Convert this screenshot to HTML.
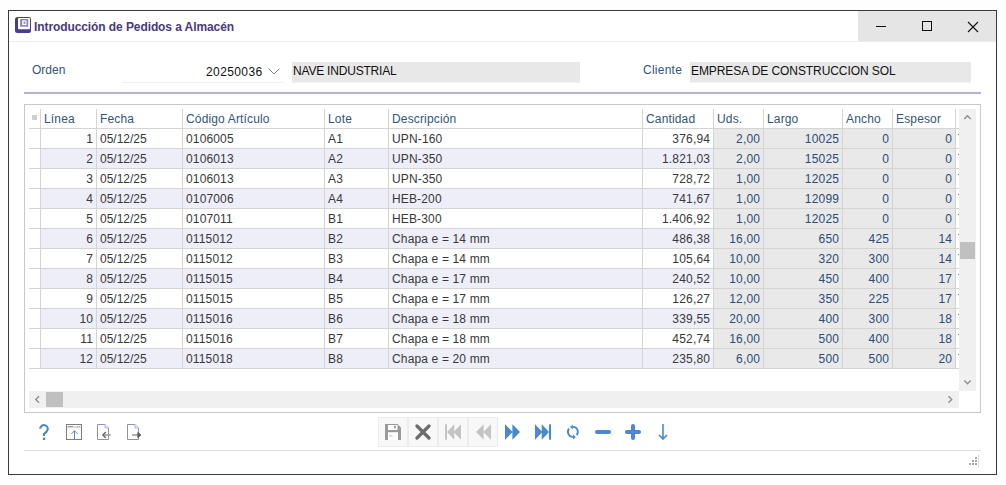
<!DOCTYPE html>
<html><head><meta charset="utf-8"><style>
*{margin:0;padding:0;box-sizing:border-box}
html,body{width:1006px;height:485px;overflow:hidden;background:#fefefe;font-family:"Liberation Sans",sans-serif;font-size:12px}
.a{position:absolute}
.win{left:8px;top:10px;width:989px;height:465px;border:1px solid #3d3548;background:#fff}
.t{position:absolute;white-space:nowrap;line-height:14px}
.hl{position:absolute;height:1px;background:#d4d4d4}
.vl{position:absolute;width:1px;background:#d4d4d4}
</style></head><body>

<div class="a win"></div>
<div class="a" style="left:9px;top:41px;width:987px;height:1px;background:#ececec"></div>
<div class="a" style="left:858px;top:11px;width:138px;height:30px;background:#e5e5e5"></div>
<div class="a" style="left:876px;top:26px;width:10px;height:1px;background:#111"></div>
<div class="a" style="left:922px;top:21px;width:10px;height:10px;border:1px solid #111"></div>
<svg class="a" style="left:967px;top:21px" width="12" height="12" viewBox="0 0 12 12"><path d="M1 1L11 11M11 1L1 11" stroke="#111" stroke-width="1.1" fill="none"/></svg>
<svg class="a" style="left:15px;top:17px" width="16" height="16" viewBox="0 0 16 16">
<rect x="0" y="0" width="16" height="16" rx="2.5" fill="#4a3d8c"/>
<rect x="3" y="1" width="12" height="11.3" rx="1" fill="#fff"/>
<rect x="5.2" y="2" width="8" height="7.7" fill="#8a82ba"/>
<rect x="7.2" y="3.3" width="4.3" height="4.8" fill="#fff"/>
<rect x="8.6" y="4.3" width="1.8" height="2.7" fill="#9a93c4"/>
</svg>
<div class="t" style="left:34px;top:19.5px;font-weight:bold;color:#4a3a7a;font-size:12px;letter-spacing:-0.09px">Introducción de Pedidos a Almacén</div>
<div class="t" style="left:32px;top:63px;color:#34557a">Orden</div>
<div class="a" style="left:122px;top:82px;width:161px;height:1px;background:#f0f0f0"></div>
<div class="t" style="left:206px;top:65px;color:#111;letter-spacing:0.4px">20250036</div>
<svg class="a" style="left:268px;top:68px" width="13" height="8" viewBox="0 0 13 8"><path d="M0.6 0.6L6 6L11.4 0.6" stroke="#808080" stroke-width="1" fill="none"/></svg>
<div class="a" style="left:292px;top:62px;width:288px;height:20px;background:#e8e8e8"></div>
<div class="t" style="left:293px;top:64px;color:#111;letter-spacing:-0.2px">NAVE INDUSTRIAL</div>
<div class="t" style="left:643px;top:63px;color:#34557a;letter-spacing:0.25px">Cliente</div>
<div class="a" style="left:690px;top:62px;width:281px;height:20px;background:#e8e8e8"></div>
<div class="t" style="left:691px;top:64px;color:#111;letter-spacing:-0.08px">EMPRESA DE CONSTRUCCION SOL</div>
<div class="a" style="left:292px;top:82px;width:288px;height:1px;background:#f3f3f3"></div>
<div class="a" style="left:690px;top:82px;width:281px;height:1px;background:#f3f3f3"></div>
<div class="a" style="left:24px;top:92px;width:957px;height:2px;background:#bab2d6"></div>
<div class="a" style="left:24px;top:104px;width:957px;height:309px;border:1px solid #c8c8c8;background:#fff"></div>
<div class="a" style="left:714px;top:129px;width:241px;height:19px;background:#e9e9e9"></div>
<div class="a" style="left:41px;top:149px;width:914px;height:19px;background:#eeeef8"></div>
<div class="a" style="left:714px;top:149px;width:241px;height:19px;background:#e9e9e9"></div>
<div class="a" style="left:714px;top:169px;width:241px;height:19px;background:#e9e9e9"></div>
<div class="a" style="left:41px;top:189px;width:914px;height:19px;background:#eeeef8"></div>
<div class="a" style="left:714px;top:189px;width:241px;height:19px;background:#e9e9e9"></div>
<div class="a" style="left:714px;top:209px;width:241px;height:19px;background:#e9e9e9"></div>
<div class="a" style="left:41px;top:229px;width:914px;height:19px;background:#eeeef8"></div>
<div class="a" style="left:714px;top:229px;width:241px;height:19px;background:#e9e9e9"></div>
<div class="a" style="left:714px;top:249px;width:241px;height:19px;background:#e9e9e9"></div>
<div class="a" style="left:41px;top:269px;width:914px;height:19px;background:#eeeef8"></div>
<div class="a" style="left:714px;top:269px;width:241px;height:19px;background:#e9e9e9"></div>
<div class="a" style="left:714px;top:289px;width:241px;height:19px;background:#e9e9e9"></div>
<div class="a" style="left:41px;top:309px;width:914px;height:19px;background:#eeeef8"></div>
<div class="a" style="left:714px;top:309px;width:241px;height:19px;background:#e9e9e9"></div>
<div class="a" style="left:714px;top:329px;width:241px;height:19px;background:#e9e9e9"></div>
<div class="a" style="left:41px;top:349px;width:914px;height:19px;background:#eeeef8"></div>
<div class="a" style="left:714px;top:349px;width:241px;height:19px;background:#e9e9e9"></div>
<div class="a" style="left:32px;top:115px;width:5px;height:5px;background:#cfcfcf"></div>
<div class="hl" style="left:29px;top:128px;width:930px"></div>
<div class="hl" style="left:29px;top:148px;width:930px"></div>
<div class="hl" style="left:29px;top:168px;width:930px"></div>
<div class="hl" style="left:29px;top:188px;width:930px"></div>
<div class="hl" style="left:29px;top:208px;width:930px"></div>
<div class="hl" style="left:29px;top:228px;width:930px"></div>
<div class="hl" style="left:29px;top:248px;width:930px"></div>
<div class="hl" style="left:29px;top:268px;width:930px"></div>
<div class="hl" style="left:29px;top:288px;width:930px"></div>
<div class="hl" style="left:29px;top:308px;width:930px"></div>
<div class="hl" style="left:29px;top:328px;width:930px"></div>
<div class="hl" style="left:29px;top:348px;width:930px"></div>
<div class="hl" style="left:29px;top:368px;width:930px"></div>
<div class="vl" style="left:40px;top:109px;height:259px"></div>
<div class="vl" style="left:96px;top:109px;height:259px"></div>
<div class="vl" style="left:182px;top:109px;height:259px"></div>
<div class="vl" style="left:324px;top:109px;height:259px"></div>
<div class="vl" style="left:388px;top:109px;height:259px"></div>
<div class="vl" style="left:642px;top:109px;height:259px"></div>
<div class="vl" style="left:713px;top:109px;height:259px"></div>
<div class="vl" style="left:763px;top:109px;height:259px"></div>
<div class="vl" style="left:842px;top:109px;height:259px"></div>
<div class="vl" style="left:892px;top:109px;height:259px"></div>
<div class="vl" style="left:955px;top:109px;height:259px"></div>
<div class="t" style="left:44px;top:112px;color:#34557a;letter-spacing:0.15px">Línea</div>
<div class="t" style="left:100px;top:112px;color:#34557a;letter-spacing:0.15px">Fecha</div>
<div class="t" style="left:186px;top:112px;color:#34557a;letter-spacing:0.15px">Código Artículo</div>
<div class="t" style="left:328px;top:112px;color:#34557a;letter-spacing:0.15px">Lote</div>
<div class="t" style="left:392px;top:112px;color:#34557a;letter-spacing:0.15px">Descripción</div>
<div class="t" style="left:646px;top:112px;color:#34557a;letter-spacing:0.15px">Cantidad</div>
<div class="t" style="left:717px;top:112px;color:#34557a;letter-spacing:0.15px">Uds.</div>
<div class="t" style="left:767px;top:112px;color:#34557a;letter-spacing:0.15px">Largo</div>
<div class="t" style="left:846px;top:112px;color:#34557a;letter-spacing:0.15px">Ancho</div>
<div class="t" style="left:896px;top:112px;color:#34557a;letter-spacing:0.15px">Espesor</div>
<div class="t" style="right:912.8px;top:132px;color:#383838;letter-spacing:0.2px">1</div>
<div class="t" style="left:100px;top:132px;color:#383838;letter-spacing:0">05/12/25</div>
<div class="t" style="left:186px;top:132px;color:#383838;letter-spacing:0.15px">0106005</div>
<div class="t" style="left:328px;top:132px;color:#383838;letter-spacing:0.15px">A1</div>
<div class="t" style="left:392px;top:132px;color:#383838;letter-spacing:0.15px">UPN-160</div>
<div class="t" style="right:295.8px;top:132px;color:#383838;letter-spacing:0.2px">376,94</div>
<div class="t" style="right:245.8px;top:132px;color:#2c4b78;letter-spacing:0.2px">2,00</div>
<div class="t" style="right:166.8px;top:132px;color:#2c4b78;letter-spacing:0.2px">10025</div>
<div class="t" style="right:116.8px;top:132px;color:#2c4b78;letter-spacing:0.2px">0</div>
<div class="t" style="right:53.8px;top:132px;color:#2c4b78;letter-spacing:0.2px">0</div>
<div class="a" style="left:958px;top:134px;width:1px;height:1px;background:#888"></div>
<div class="t" style="right:912.8px;top:152px;color:#383838;letter-spacing:0.2px">2</div>
<div class="t" style="left:100px;top:152px;color:#383838;letter-spacing:0">05/12/25</div>
<div class="t" style="left:186px;top:152px;color:#383838;letter-spacing:0.15px">0106013</div>
<div class="t" style="left:328px;top:152px;color:#383838;letter-spacing:0.15px">A2</div>
<div class="t" style="left:392px;top:152px;color:#383838;letter-spacing:0.15px">UPN-350</div>
<div class="t" style="right:295.8px;top:152px;color:#383838;letter-spacing:0.2px">1.821,03</div>
<div class="t" style="right:245.8px;top:152px;color:#2c4b78;letter-spacing:0.2px">2,00</div>
<div class="t" style="right:166.8px;top:152px;color:#2c4b78;letter-spacing:0.2px">15025</div>
<div class="t" style="right:116.8px;top:152px;color:#2c4b78;letter-spacing:0.2px">0</div>
<div class="t" style="right:53.8px;top:152px;color:#2c4b78;letter-spacing:0.2px">0</div>
<div class="a" style="left:958px;top:154px;width:1px;height:1px;background:#888"></div>
<div class="t" style="right:912.8px;top:172px;color:#383838;letter-spacing:0.2px">3</div>
<div class="t" style="left:100px;top:172px;color:#383838;letter-spacing:0">05/12/25</div>
<div class="t" style="left:186px;top:172px;color:#383838;letter-spacing:0.15px">0106013</div>
<div class="t" style="left:328px;top:172px;color:#383838;letter-spacing:0.15px">A3</div>
<div class="t" style="left:392px;top:172px;color:#383838;letter-spacing:0.15px">UPN-350</div>
<div class="t" style="right:295.8px;top:172px;color:#383838;letter-spacing:0.2px">728,72</div>
<div class="t" style="right:245.8px;top:172px;color:#2c4b78;letter-spacing:0.2px">1,00</div>
<div class="t" style="right:166.8px;top:172px;color:#2c4b78;letter-spacing:0.2px">12025</div>
<div class="t" style="right:116.8px;top:172px;color:#2c4b78;letter-spacing:0.2px">0</div>
<div class="t" style="right:53.8px;top:172px;color:#2c4b78;letter-spacing:0.2px">0</div>
<div class="a" style="left:958px;top:174px;width:1px;height:1px;background:#888"></div>
<div class="t" style="right:912.8px;top:192px;color:#383838;letter-spacing:0.2px">4</div>
<div class="t" style="left:100px;top:192px;color:#383838;letter-spacing:0">05/12/25</div>
<div class="t" style="left:186px;top:192px;color:#383838;letter-spacing:0.15px">0107006</div>
<div class="t" style="left:328px;top:192px;color:#383838;letter-spacing:0.15px">A4</div>
<div class="t" style="left:392px;top:192px;color:#383838;letter-spacing:0.15px">HEB-200</div>
<div class="t" style="right:295.8px;top:192px;color:#383838;letter-spacing:0.2px">741,67</div>
<div class="t" style="right:245.8px;top:192px;color:#2c4b78;letter-spacing:0.2px">1,00</div>
<div class="t" style="right:166.8px;top:192px;color:#2c4b78;letter-spacing:0.2px">12099</div>
<div class="t" style="right:116.8px;top:192px;color:#2c4b78;letter-spacing:0.2px">0</div>
<div class="t" style="right:53.8px;top:192px;color:#2c4b78;letter-spacing:0.2px">0</div>
<div class="a" style="left:958px;top:194px;width:1px;height:1px;background:#888"></div>
<div class="t" style="right:912.8px;top:212px;color:#383838;letter-spacing:0.2px">5</div>
<div class="t" style="left:100px;top:212px;color:#383838;letter-spacing:0">05/12/25</div>
<div class="t" style="left:186px;top:212px;color:#383838;letter-spacing:0.15px">0107011</div>
<div class="t" style="left:328px;top:212px;color:#383838;letter-spacing:0.15px">B1</div>
<div class="t" style="left:392px;top:212px;color:#383838;letter-spacing:0.15px">HEB-300</div>
<div class="t" style="right:295.8px;top:212px;color:#383838;letter-spacing:0.2px">1.406,92</div>
<div class="t" style="right:245.8px;top:212px;color:#2c4b78;letter-spacing:0.2px">1,00</div>
<div class="t" style="right:166.8px;top:212px;color:#2c4b78;letter-spacing:0.2px">12025</div>
<div class="t" style="right:116.8px;top:212px;color:#2c4b78;letter-spacing:0.2px">0</div>
<div class="t" style="right:53.8px;top:212px;color:#2c4b78;letter-spacing:0.2px">0</div>
<div class="a" style="left:958px;top:214px;width:1px;height:1px;background:#888"></div>
<div class="t" style="right:912.8px;top:232px;color:#383838;letter-spacing:0.2px">6</div>
<div class="t" style="left:100px;top:232px;color:#383838;letter-spacing:0">05/12/25</div>
<div class="t" style="left:186px;top:232px;color:#383838;letter-spacing:0.15px">0115012</div>
<div class="t" style="left:328px;top:232px;color:#383838;letter-spacing:0.15px">B2</div>
<div class="t" style="left:392px;top:232px;color:#383838;letter-spacing:0.15px">Chapa e = 14 mm</div>
<div class="t" style="right:295.8px;top:232px;color:#383838;letter-spacing:0.2px">486,38</div>
<div class="t" style="right:245.8px;top:232px;color:#2c4b78;letter-spacing:0.2px">16,00</div>
<div class="t" style="right:166.8px;top:232px;color:#2c4b78;letter-spacing:0.2px">650</div>
<div class="t" style="right:116.8px;top:232px;color:#2c4b78;letter-spacing:0.2px">425</div>
<div class="t" style="right:53.8px;top:232px;color:#2c4b78;letter-spacing:0.2px">14</div>
<div class="a" style="left:958px;top:234px;width:1px;height:1px;background:#888"></div>
<div class="t" style="right:912.8px;top:252px;color:#383838;letter-spacing:0.2px">7</div>
<div class="t" style="left:100px;top:252px;color:#383838;letter-spacing:0">05/12/25</div>
<div class="t" style="left:186px;top:252px;color:#383838;letter-spacing:0.15px">0115012</div>
<div class="t" style="left:328px;top:252px;color:#383838;letter-spacing:0.15px">B3</div>
<div class="t" style="left:392px;top:252px;color:#383838;letter-spacing:0.15px">Chapa e = 14 mm</div>
<div class="t" style="right:295.8px;top:252px;color:#383838;letter-spacing:0.2px">105,64</div>
<div class="t" style="right:245.8px;top:252px;color:#2c4b78;letter-spacing:0.2px">10,00</div>
<div class="t" style="right:166.8px;top:252px;color:#2c4b78;letter-spacing:0.2px">320</div>
<div class="t" style="right:116.8px;top:252px;color:#2c4b78;letter-spacing:0.2px">300</div>
<div class="t" style="right:53.8px;top:252px;color:#2c4b78;letter-spacing:0.2px">14</div>
<div class="a" style="left:958px;top:254px;width:1px;height:1px;background:#888"></div>
<div class="t" style="right:912.8px;top:272px;color:#383838;letter-spacing:0.2px">8</div>
<div class="t" style="left:100px;top:272px;color:#383838;letter-spacing:0">05/12/25</div>
<div class="t" style="left:186px;top:272px;color:#383838;letter-spacing:0.15px">0115015</div>
<div class="t" style="left:328px;top:272px;color:#383838;letter-spacing:0.15px">B4</div>
<div class="t" style="left:392px;top:272px;color:#383838;letter-spacing:0.15px">Chapa e = 17 mm</div>
<div class="t" style="right:295.8px;top:272px;color:#383838;letter-spacing:0.2px">240,52</div>
<div class="t" style="right:245.8px;top:272px;color:#2c4b78;letter-spacing:0.2px">10,00</div>
<div class="t" style="right:166.8px;top:272px;color:#2c4b78;letter-spacing:0.2px">450</div>
<div class="t" style="right:116.8px;top:272px;color:#2c4b78;letter-spacing:0.2px">400</div>
<div class="t" style="right:53.8px;top:272px;color:#2c4b78;letter-spacing:0.2px">17</div>
<div class="a" style="left:958px;top:274px;width:1px;height:1px;background:#888"></div>
<div class="t" style="right:912.8px;top:292px;color:#383838;letter-spacing:0.2px">9</div>
<div class="t" style="left:100px;top:292px;color:#383838;letter-spacing:0">05/12/25</div>
<div class="t" style="left:186px;top:292px;color:#383838;letter-spacing:0.15px">0115015</div>
<div class="t" style="left:328px;top:292px;color:#383838;letter-spacing:0.15px">B5</div>
<div class="t" style="left:392px;top:292px;color:#383838;letter-spacing:0.15px">Chapa e = 17 mm</div>
<div class="t" style="right:295.8px;top:292px;color:#383838;letter-spacing:0.2px">126,27</div>
<div class="t" style="right:245.8px;top:292px;color:#2c4b78;letter-spacing:0.2px">12,00</div>
<div class="t" style="right:166.8px;top:292px;color:#2c4b78;letter-spacing:0.2px">350</div>
<div class="t" style="right:116.8px;top:292px;color:#2c4b78;letter-spacing:0.2px">225</div>
<div class="t" style="right:53.8px;top:292px;color:#2c4b78;letter-spacing:0.2px">17</div>
<div class="a" style="left:958px;top:294px;width:1px;height:1px;background:#888"></div>
<div class="t" style="right:912.8px;top:312px;color:#383838;letter-spacing:0.2px">10</div>
<div class="t" style="left:100px;top:312px;color:#383838;letter-spacing:0">05/12/25</div>
<div class="t" style="left:186px;top:312px;color:#383838;letter-spacing:0.15px">0115016</div>
<div class="t" style="left:328px;top:312px;color:#383838;letter-spacing:0.15px">B6</div>
<div class="t" style="left:392px;top:312px;color:#383838;letter-spacing:0.15px">Chapa e = 18 mm</div>
<div class="t" style="right:295.8px;top:312px;color:#383838;letter-spacing:0.2px">339,55</div>
<div class="t" style="right:245.8px;top:312px;color:#2c4b78;letter-spacing:0.2px">20,00</div>
<div class="t" style="right:166.8px;top:312px;color:#2c4b78;letter-spacing:0.2px">400</div>
<div class="t" style="right:116.8px;top:312px;color:#2c4b78;letter-spacing:0.2px">300</div>
<div class="t" style="right:53.8px;top:312px;color:#2c4b78;letter-spacing:0.2px">18</div>
<div class="a" style="left:958px;top:314px;width:1px;height:1px;background:#888"></div>
<div class="t" style="right:912.8px;top:332px;color:#383838;letter-spacing:0.2px">11</div>
<div class="t" style="left:100px;top:332px;color:#383838;letter-spacing:0">05/12/25</div>
<div class="t" style="left:186px;top:332px;color:#383838;letter-spacing:0.15px">0115016</div>
<div class="t" style="left:328px;top:332px;color:#383838;letter-spacing:0.15px">B7</div>
<div class="t" style="left:392px;top:332px;color:#383838;letter-spacing:0.15px">Chapa e = 18 mm</div>
<div class="t" style="right:295.8px;top:332px;color:#383838;letter-spacing:0.2px">452,74</div>
<div class="t" style="right:245.8px;top:332px;color:#2c4b78;letter-spacing:0.2px">16,00</div>
<div class="t" style="right:166.8px;top:332px;color:#2c4b78;letter-spacing:0.2px">500</div>
<div class="t" style="right:116.8px;top:332px;color:#2c4b78;letter-spacing:0.2px">400</div>
<div class="t" style="right:53.8px;top:332px;color:#2c4b78;letter-spacing:0.2px">18</div>
<div class="a" style="left:958px;top:334px;width:1px;height:1px;background:#888"></div>
<div class="t" style="right:912.8px;top:352px;color:#383838;letter-spacing:0.2px">12</div>
<div class="t" style="left:100px;top:352px;color:#383838;letter-spacing:0">05/12/25</div>
<div class="t" style="left:186px;top:352px;color:#383838;letter-spacing:0.15px">0115018</div>
<div class="t" style="left:328px;top:352px;color:#383838;letter-spacing:0.15px">B8</div>
<div class="t" style="left:392px;top:352px;color:#383838;letter-spacing:0.15px">Chapa e = 20 mm</div>
<div class="t" style="right:295.8px;top:352px;color:#383838;letter-spacing:0.2px">235,80</div>
<div class="t" style="right:245.8px;top:352px;color:#2c4b78;letter-spacing:0.2px">6,00</div>
<div class="t" style="right:166.8px;top:352px;color:#2c4b78;letter-spacing:0.2px">500</div>
<div class="t" style="right:116.8px;top:352px;color:#2c4b78;letter-spacing:0.2px">500</div>
<div class="t" style="right:53.8px;top:352px;color:#2c4b78;letter-spacing:0.2px">20</div>
<div class="a" style="left:958px;top:354px;width:1px;height:1px;background:#888"></div>
<div class="a" style="left:959px;top:109px;width:17px;height:282px;background:#f0f0f0"></div>
<svg class="a" style="left:963px;top:114px" width="9" height="7" viewBox="0 0 9 7"><path d="M1.3 5L4.5 1.8L7.7 5" stroke="#8f8f8f" stroke-width="1.4" fill="none"/></svg>
<svg class="a" style="left:963px;top:379px" width="9" height="7" viewBox="0 0 9 7"><path d="M1.3 1.5L4.5 4.7L7.7 1.5" stroke="#8f8f8f" stroke-width="1.4" fill="none"/></svg>
<div class="a" style="left:960px;top:242px;width:15px;height:17px;background:#c0c0c0"></div>
<div class="a" style="left:29px;top:391px;width:930px;height:17px;background:#f0f0f0"></div>
<svg class="a" style="left:34px;top:395px" width="7" height="9" viewBox="0 0 7 9"><path d="M5 1.3L1.8 4.5L5 7.7" stroke="#8f8f8f" stroke-width="1.4" fill="none"/></svg>
<svg class="a" style="left:947px;top:395px" width="7" height="9" viewBox="0 0 7 9"><path d="M1.5 1.3L4.7 4.5L1.5 7.7" stroke="#8f8f8f" stroke-width="1.4" fill="none"/></svg>
<div class="a" style="left:46px;top:392px;width:17px;height:15px;background:#c0c0c0"></div>
<div class="a" style="left:24px;top:450px;width:957px;height:1px;background:#dcdcdc"></div>
<svg class="a" style="left:38px;top:423px" width="12" height="18" viewBox="0 0 12 18">
<path d="M2.2 5.8A3.8 3.8 0 1 1 8.6 8.6L6 10.9V13" stroke="#4a86c8" stroke-width="2.1" fill="none"/>
<rect x="4.9" y="14.6" width="2.3" height="2.4" fill="#4a86c8"/>
</svg>
<svg class="a" style="left:66px;top:424px" width="16" height="16" viewBox="0 0 16 16">
<rect x="0.5" y="0.5" width="15" height="15" fill="none" stroke="#7e7e7e" stroke-width="1"/>
<rect x="1" y="2.2" width="14" height="2" fill="#dcdcdc"/>
<rect x="2" y="2" width="5" height="1" fill="#9a9a9a"/>
<rect x="11" y="2" width="1" height="1" fill="#aaa"/>
<rect x="13" y="2" width="1" height="1" fill="#aaa"/>
<path d="M8.5 15.5V6.8M5.5 9.8L8.5 6.8L11.5 9.8" stroke="#5b82bd" stroke-width="1" fill="none"/>
</svg>
<svg class="a" style="left:97px;top:424px" width="15" height="16" viewBox="0 0 15 16">
<path d="M0.5 0.5H8L11.5 4V15.5H0.5Z" fill="none" stroke="#8c92b8" stroke-width="1"/>
<path d="M8 0.5V4H11.5" fill="#eeeeff" stroke="#a0a6cc" stroke-width="0.8"/>
<path d="M6.5 11H13.8" stroke="#a8a8a8" stroke-width="1.8"/>
<path d="M8.8 8L5.8 11L8.8 14" stroke="#5e5e5e" stroke-width="1.2" fill="none"/>
</svg>
<svg class="a" style="left:127px;top:424px" width="15" height="16" viewBox="0 0 15 16">
<path d="M0.5 0.5H8L11.5 4V15.5H0.5Z" fill="none" stroke="#8a94a8" stroke-width="1"/>
<path d="M8 0.5V4H11.5" fill="#eeeeff" stroke="#a0a6cc" stroke-width="0.8"/>
<path d="M5 11H11" stroke="#a8a8a8" stroke-width="1.8"/>
<path d="M10.9 8.3L13.8 11L10.9 13.7Z" stroke="#606060" stroke-width="1" fill="#606060"/>
</svg>
<div class="a" style="left:378px;top:417px;width:30px;height:30px;background:#f8f8f8;border:1px solid #ececec"></div>
<div class="a" style="left:408px;top:417px;width:30px;height:30px;background:#f8f8f8;border:1px solid #ececec"></div>
<div class="a" style="left:438px;top:417px;width:30px;height:30px;background:#f8f8f8;border:1px solid #ececec"></div>
<div class="a" style="left:468px;top:417px;width:30px;height:30px;background:#f8f8f8;border:1px solid #ececec"></div>
<svg class="a" style="left:385px;top:424px" width="16" height="16" viewBox="0 0 16 16">
<path d="M0 0H12.5L16 3.5V16H0Z" fill="#9a9a9a"/>
<rect x="3" y="1" width="9.5" height="5" fill="#fdfdfd"/>
<rect x="9" y="1.8" width="1.8" height="2.6" fill="#9a9a9a"/>
<rect x="3" y="8.2" width="10" height="7.8" fill="#fdfdfd"/>
<rect x="4.2" y="11" width="2.5" height="0.8" fill="#c0c0c0"/>
<rect x="4.2" y="12.2" width="4" height="0.6" fill="#d0d0d0"/>
</svg>
<svg class="a" style="left:415px;top:424px" width="16" height="16" viewBox="0 0 16 16"><path d="M2 2L14 14M14 2L2 14" stroke="#6c6c6c" stroke-width="3.2" stroke-linecap="round" fill="none"/></svg>
<svg class="a" style="left:445px;top:424px" width="17" height="16" viewBox="0 0 17 16"><rect x="0" y="0.3" width="2" height="15.4" fill="#c4c4c4"/><path d="M2 8L9.3 0.3V15.7Z M8.7 8L16 0.3V15.7Z" fill="#c4c4c4"/></svg>
<svg class="a" style="left:476px;top:424px" width="16" height="16" viewBox="0 0 16 16"><path d="M0 8L7.6 0.3V15.7Z M7.4 8L15 0.3V15.7Z" fill="#c4c4c4"/></svg>
<svg class="a" style="left:505px;top:424px" width="16" height="16" viewBox="0 0 16 16"><path d="M0 0.3L7.6 8L0 15.7Z M7.4 0.3L15 8L7.4 15.7Z" fill="#4a87d0"/></svg>
<svg class="a" style="left:535px;top:424px" width="17" height="16" viewBox="0 0 17 16"><rect x="14" y="0.3" width="2" height="15.4" fill="#4a87d0"/><path d="M0 0.3L7.3 8L0 15.7Z M6.7 0.3L14 8L6.7 15.7Z" fill="#4a87d0"/></svg>
<svg class="a" style="left:563px;top:422px" width="20" height="20" viewBox="0 0 20 20">
<path d="M9.6 4.9A5 5 0 0 1 13.7 13.1" stroke="#4a87d0" stroke-width="1.8" fill="none"/>
<path d="M6.1 6.7A5 5 0 0 0 10.2 14.9" stroke="#4a87d0" stroke-width="1.8" fill="none"/>
<path d="M9.8 2.4V7.4L7 4.9Z" fill="#4a87d0"/>
<path d="M10 12.4V17.4L12.8 14.9Z" fill="#4a87d0"/>
</svg>
<div class="a" style="left:595px;top:430px;width:16px;height:4px;border-radius:2px;background:#4a87d0"></div>
<div class="a" style="left:625px;top:430px;width:16px;height:4px;border-radius:2px;background:#4a87d0"></div>
<div class="a" style="left:631px;top:424px;width:4px;height:16px;border-radius:2px;background:#4a87d0"></div>
<svg class="a" style="left:658px;top:424px" width="10" height="16" viewBox="0 0 10 16"><path d="M5 0V15M1 11L5 15L9 11" stroke="#4a87d0" stroke-width="1.6" fill="none"/></svg>
<div class="a" style="left:975px;top:457px;width:2px;height:2px;background:#a8a8a8"></div>
<div class="a" style="left:972px;top:460px;width:2px;height:2px;background:#a8a8a8"></div>
<div class="a" style="left:975px;top:460px;width:2px;height:2px;background:#a8a8a8"></div>
<div class="a" style="left:969px;top:463px;width:2px;height:2px;background:#a8a8a8"></div>
<div class="a" style="left:972px;top:463px;width:2px;height:2px;background:#a8a8a8"></div>
<div class="a" style="left:975px;top:463px;width:2px;height:2px;background:#a8a8a8"></div>
<div class="a" style="left:978px;top:454px;width:1px;height:13px;background:#e0e0e0"></div>
</body></html>
